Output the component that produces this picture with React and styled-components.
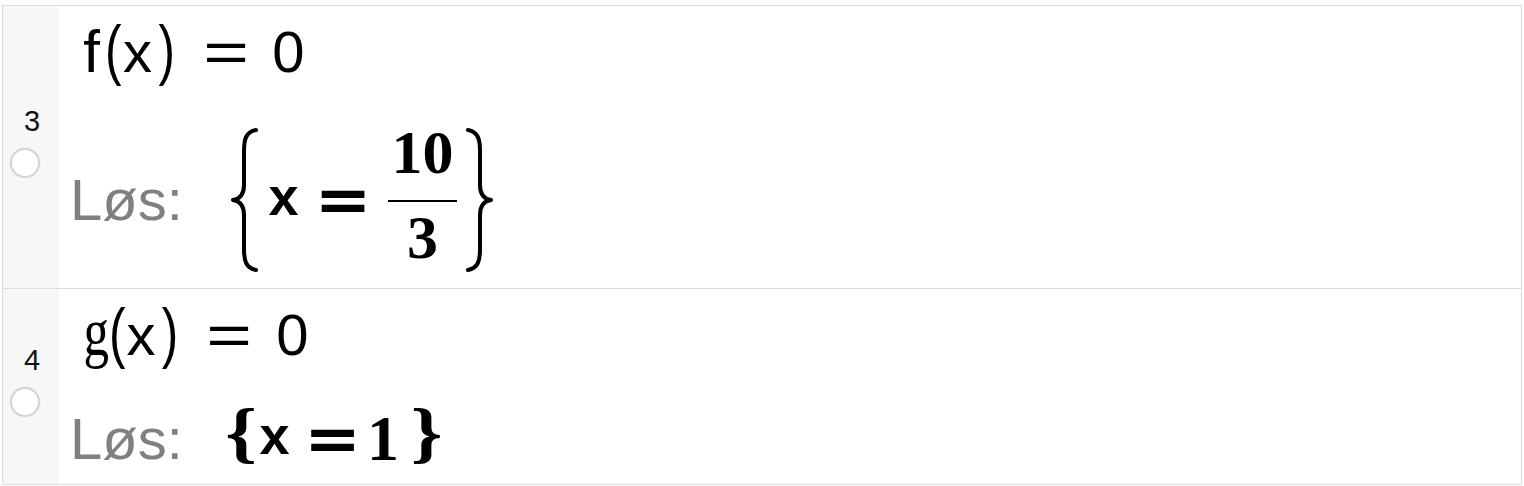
import React from "react";
import styled, { createGlobalStyle } from "styled-components";

const GlobalStyle = createGlobalStyle`
  html, body { margin: 0; padding: 0; background: #ffffff; }
  body { font-family: "Liberation Sans", Arial, sans-serif; color: #000; }
`;

const Page = styled.div`
  width: 1524px;
  height: 486px;
  box-sizing: border-box;
  padding: 5px 0 0 2px;
  background: #fff;
`;

const Sheet = styled.div`
  width: 1520px;
  box-sizing: border-box;
  border-left: 1px solid #dcdcdc;
  border-right: 1px solid #dcdcdc;
  border-bottom: 1px solid #dcdcdc;
`;

const Row = styled.div`
  display: flex;
  height: ${(p) => p.$h}px;
  border-top: 1px solid #dcdcdc;
`;

const Gutter = styled.div`
  width: 56px;
  flex: none;
  background: #f7f7f7;
  display: flex;
  flex-direction: column;
  justify-content: center;
  align-items: center;
`;

const RowNumber = styled.div`
  font-family: "Liberation Sans", Arial, sans-serif;
  font-size: 29px;
  line-height: 28px;
  margin-left: 2px;
  color: #111;
`;

const Marker = styled.div`
  align-self: flex-start;
  margin-left: 7px;
  margin-top: 13px;
  margin-bottom: 10px;
  width: 30px;
  height: 30px;
  box-sizing: border-box;
  border-radius: 50%;
  border: 2px solid #d4d4d4;
  background: #fff;
  box-shadow: 0 0 1px rgba(0, 0, 0, 0.15);
`;

const Cell = styled.div`
  flex: 1;
  display: flex;
  flex-direction: column;
`;

const InputLine = styled.div`
  display: flex;
  align-items: baseline;
  height: 96px;
  box-sizing: border-box;
  padding: 8px 0 0 21px;
  flex: none;
`;

const OutputLine = styled.div`
  flex: 1;
  display: flex;
  align-items: center;
  box-sizing: border-box;
  padding: ${(p) => p.$pt}px 0 0 11px;
`;

const Glyph = styled.span`
  display: inline-block;
  flex: none;
  width: ${(p) => p.$w}px;
  margin-left: ${(p) => p.$ml || 0}px;
  text-align: center;
  font-family: ${(p) =>
    p.$serif ? '"Liberation Serif", "Times New Roman", serif' : '"Liberation Sans", Arial, sans-serif'};
  font-size: ${(p) => p.$fs}px;
  line-height: 70px;
  color: #000;
  transform: ${(p) => (p.$sx ? `scaleX(${p.$sx})` : "none")};
`;

const Label = styled.span`
  flex: none;
  width: 113px;
  white-space: nowrap;
  font-family: "Liberation Sans", Arial, sans-serif;
  font-size: 58px;
  line-height: 58px;
  color: #808080;
`;

const MathGlyph = styled.span`
  display: inline-block;
  flex: none;
  width: ${(p) => p.$w}px;
  margin-left: ${(p) => p.$ml || 0}px;
  margin-bottom: ${(p) => (p.$lift || 0) * 2}px;
  text-align: center;
  font-family: ${(p) => p.$font};
  font-weight: 700;
  font-size: ${(p) => p.$fs}px;
  line-height: ${(p) => p.$fs}px;
  color: #000;
  transform: ${(p) => (p.$sx ? `scaleX(${p.$sx})` : "none")};
`;

const BraceBox = styled.svg`
  flex: none;
  display: block;
  margin-left: ${(p) => p.$ml}px;
`;

const Fraction = styled.span`
  flex: none;
  display: inline-flex;
  flex-direction: column;
  align-items: center;
  width: 69px;
  margin-left: 17px;
  margin-bottom: 11px;
`;

const FracPart = styled.span`
  font-family: "Liberation Serif", "Times New Roman", serif;
  font-weight: 700;
  font-size: 62px;
  line-height: 62px;
  color: #000;
`;

const FracBar = styled.span`
  width: 69px;
  height: 2px;
  background: #000;
  margin: ${(p) => p.$m};
`;

const SANS = '"Liberation Sans", Arial, sans-serif';
const SANS_EQ = '"DejaVu Sans", sans-serif';
const SERIF = '"Liberation Serif", "Times New Roman", serif';

function TallBrace({ right, ml }) {
  const d = "M26 3 C16 5 14 12 14 24 L14 58 C14 68 10 72 3 73 C10 74 14 78 14 88 L14 122 C14 134 16 141 26 143";
  return (
    <BraceBox $ml={ml} width="28" height="146" viewBox="0 0 28 146">
      <path
        d={d}
        fill="none"
        stroke="#000"
        strokeWidth="4"
        strokeLinecap="round"
        strokeLinejoin="round"
        transform={right ? "translate(28 0) scale(-1 1)" : undefined}
      />
    </BraceBox>
  );
}

function Gut({ n }) {
  return (
    <Gutter>
      <RowNumber>{n}</RowNumber>
      <Marker />
    </Gutter>
  );
}

export default function App() {
  return (
    <>
      <GlobalStyle />
      <Page>
        <Sheet>
          <Row $h={282}>
            <Gut n="3" />
            <Cell>
              <InputLine>
                <Glyph $w={23} $fs={60}>f</Glyph>
                <Glyph $w={15} $fs={66} $sx={0.75}>(</Glyph>
                <Glyph $w={39} $fs={58}>x</Glyph>
                <Glyph $w={11} $fs={66} $sx={0.75}>)</Glyph>
                <Glyph $w={52} $ml={32} $fs={58} $sx={1.35}>=</Glyph>
                <Glyph $w={37} $ml={18} $fs={58}>0</Glyph>
              </InputLine>
              <OutputLine $pt={10}>
                <Label>Løs:</Label>
                <TallBrace ml={47} />
                <MathGlyph $w={31} $ml={10} $fs={54} $font={SANS} $lift={4}>x</MathGlyph>
                <MathGlyph $w={56} $ml={16} $fs={62} $font={SANS_EQ} $sx={1.1}>=</MathGlyph>
                <Fraction>
                  <FracPart>10</FracPart>
                  <FracBar $m="17px 0 4px" />
                  <FracPart>3</FracPart>
                </Fraction>
                <TallBrace right ml={9} />
              </OutputLine>
            </Cell>
          </Row>
          <Row $h={195}>
            <Gut n="4" />
            <Cell>
              <InputLine>
                <Glyph $w={27} $fs={68} $serif $sx={0.75}>g</Glyph>
                <Glyph $w={15} $fs={66} $sx={0.75}>(</Glyph>
                <Glyph $w={38} $fs={58}>x</Glyph>
                <Glyph $w={13} $fs={66} $sx={0.75}>)</Glyph>
                <Glyph $w={52} $ml={30} $fs={58} $sx={1.35}>=</Glyph>
                <Glyph $w={39} $ml={18} $fs={58}>0</Glyph>
              </InputLine>
              <OutputLine $pt={8}>
                <Label>Løs:</Label>
                <MathGlyph $w={28} $ml={44} $fs={67} $font={SERIF} $lift={6} $sx={1.2}>{"{"}</MathGlyph>
                <MathGlyph $w={31} $ml={4} $fs={54} $font={SANS} $lift={4}>x</MathGlyph>
                <MathGlyph $w={55} $ml={15} $fs={62} $font={SANS_EQ} $sx={1.1}>=</MathGlyph>
                <MathGlyph $w={32} $ml={7} $fs={64} $font={SERIF}>1</MathGlyph>
                <MathGlyph $w={29} $ml={13} $fs={67} $font={SERIF} $lift={6} $sx={1.2}>{"}"}</MathGlyph>
              </OutputLine>
            </Cell>
          </Row>
        </Sheet>
      </Page>
    </>
  );
}
